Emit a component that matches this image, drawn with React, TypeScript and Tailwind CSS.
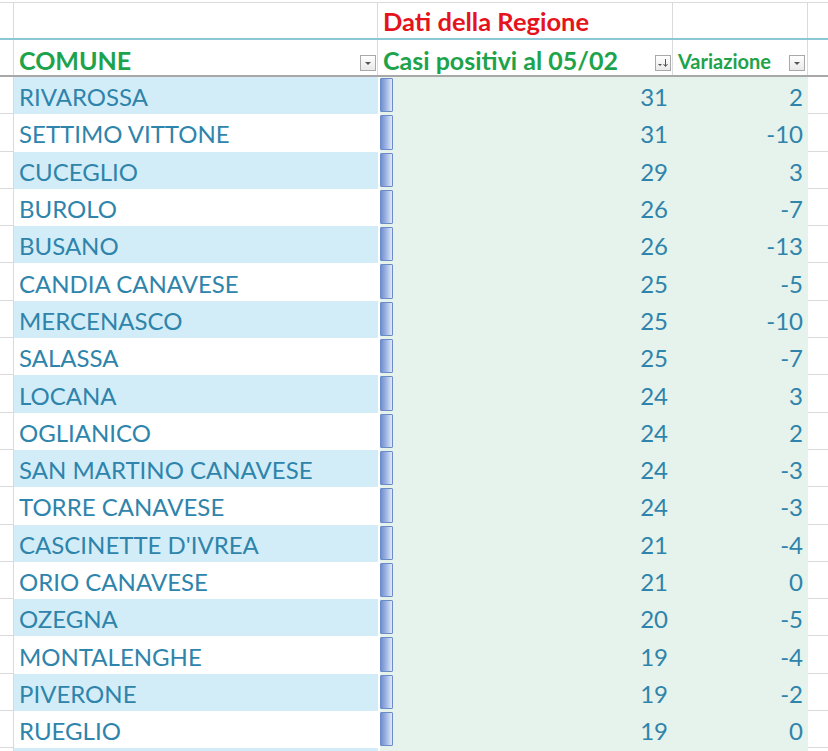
import React from "react";

type Row = { name: string; casi: number; diff: number };

const rows: Row[] = [
  { name: "RIVAROSSA", casi: 31, diff: 2 },
  { name: "SETTIMO VITTONE", casi: 31, diff: -10 },
  { name: "CUCEGLIO", casi: 29, diff: 3 },
  { name: "BUROLO", casi: 26, diff: -7 },
  { name: "BUSANO", casi: 26, diff: -13 },
  { name: "CANDIA CANAVESE", casi: 25, diff: -5 },
  { name: "MERCENASCO", casi: 25, diff: -10 },
  { name: "SALASSA", casi: 25, diff: -7 },
  { name: "LOCANA", casi: 24, diff: 3 },
  { name: "OGLIANICO", casi: 24, diff: 2 },
  { name: "SAN MARTINO CANAVESE", casi: 24, diff: -3 },
  { name: "TORRE CANAVESE", casi: 24, diff: -3 },
  { name: "CASCINETTE D'IVREA", casi: 21, diff: -4 },
  { name: "ORIO CANAVESE", casi: 21, diff: 0 },
  { name: "OZEGNA", casi: 20, diff: -5 },
  { name: "MONTALENGHE", casi: 19, diff: -4 },
  { name: "PIVERONE", casi: 19, diff: -2 },
  { name: "RUEGLIO", casi: 19, diff: 0 },
];

function FilterButton({ sorted = false }: { sorted?: boolean }) {
  return (
    <div className="w-[16px] h-[16px] border border-[#a9a9a9] bg-gradient-to-b from-white to-[#e9e9e9] flex items-center justify-center shrink-0 mb-[1px]">
      {sorted ? (
        <svg width="12" height="10" viewBox="0 0 12 10">
          <path d="M1 6 L5 6 L3 8 Z" fill="#555" />
          <path d="M8.5 1 L8.5 8" stroke="#555" strokeWidth="1" />
          <path d="M6.5 6 L8.5 8.5 L10.5 6" stroke="#555" strokeWidth="1" fill="none" />
        </svg>
      ) : (
        <svg width="8" height="5" viewBox="0 0 8 5">
          <path d="M1 1 L7 1 L4 4 Z" fill="#555" />
        </svg>
      )}
    </div>
  );
}

function DataRow({ row, striped }: { row?: Row; striped: boolean }) {
  return (
    <div className="flex h-[37.3px] shrink-0 leading-none">
      <div className="w-[14px] shrink-0 border-r border-b border-[#dadada] bg-white" />
      <div
        className={
          "w-[364px] shrink-0 flex items-center pl-[5px] pt-[3px] " +
          (striped ? "bg-[#d3edf8]" : "bg-white")
        }
      >
        {row?.name}
      </div>
      <div className="w-[295px] shrink-0 flex items-center bg-[#e6f2ec] relative">
        <div className="absolute left-0 top-0 bottom-0 w-[2px] bg-white" />
        {row && (
          <div className="absolute left-[2px] top-[1px] bottom-[2px] w-[13px] rounded-[1px] border border-[#6b8bc9] bg-gradient-to-r from-[#6f8fd0] via-[#a3b8e4] to-[#e3eaf7]" />
        )}
        <div className="ml-auto pr-[5px] pt-[3px]">{row?.casi}</div>
      </div>
      <div className="w-[135px] shrink-0 flex items-center justify-end pr-[5px] pt-[3px] bg-[#e6f2ec]">
        {row?.diff}
      </div>
      <div className="flex-1 border-b border-[#dadada] bg-white" />
    </div>
  );
}

export default function App() {
  return (
    <div
      className="w-[828px] h-[751px] overflow-hidden bg-white flex flex-col text-[24px] text-[#2e84ab]"
      style={{ fontFamily: "Lato, 'Open Sans', sans-serif" }}
    >
      {/* title row */}
      <div className="flex h-[36px] shrink-0 border-t border-[#dadada] mt-[2px]">
        <div className="w-[14px] shrink-0 border-r border-[#dadada]" />
        <div className="w-[364px] shrink-0 border-r border-[#dadada]" />
        <div className="w-[295px] shrink-0 border-r border-[#dadada] flex items-center pl-[5px] pt-[3px] font-bold text-[25.5px] leading-none text-[#e5131b]">
          Dati della Regione
        </div>
        <div className="w-[135px] shrink-0 border-r border-[#dadada]" />
        <div className="flex-1" />
      </div>
      {/* header row */}
      <div className="flex h-[37px] shrink-0 border-t-2 border-[#8cc8d6]">
        <div className="w-[14px] shrink-0 border-r border-[#dadada]" />
        <div className="w-[364px] shrink-0 border-r border-[#dadada] flex items-end justify-between pl-[5px] pr-[1px] pb-[3px] font-bold text-[25px] text-[#1da34b]">
          <span className="leading-none mb-[-1px]">COMUNE</span>
          <FilterButton />
        </div>
        <div className="w-[295px] shrink-0 border-r border-[#dadada] flex items-end justify-between pl-[5px] pr-[1px] pb-[3px] font-bold text-[25px] text-[#1da34b]">
          <span className="leading-none mb-[-1px]">Casi positivi al 05/02</span>
          <FilterButton sorted />
        </div>
        <div className="w-[135px] shrink-0 border-r border-[#dadada] flex items-end justify-between pl-[5px] pr-[2px] pb-[3px] font-bold text-[20px] text-[#1da34b]">
          <span className="leading-none mb-[1px]">Variazione</span>
          <FilterButton />
        </div>
        <div className="flex-1" />
      </div>
      <div className="h-[2px] shrink-0 bg-[#a8a8a8]" />
      {rows.map((r, i) => (
        <DataRow key={r.name} row={r} striped={i % 2 === 0} />
      ))}
      <DataRow striped />
    </div>
  );
}
